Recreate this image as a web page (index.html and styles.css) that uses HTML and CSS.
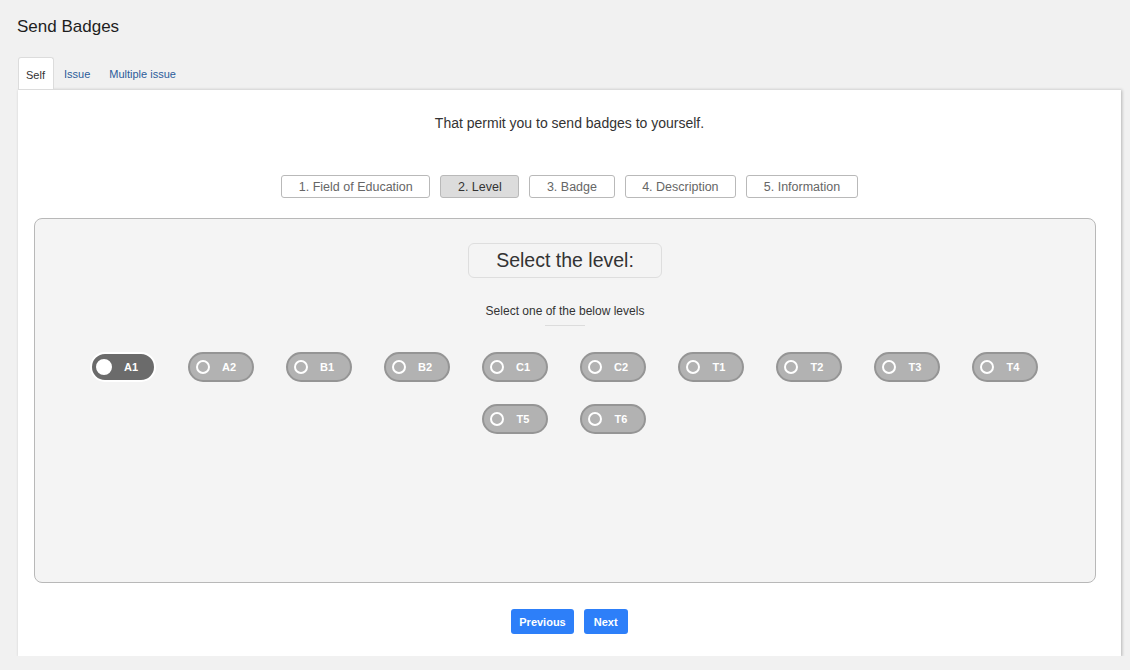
FILE: index.html
```html
<!DOCTYPE html>
<html>
<head>
<meta charset="utf-8">
<link rel="stylesheet" href="styles.css">
</head>
<body>
<div class="page">
  <h1 class="title">Send Badges</h1>
  <div class="tabs">
    <div class="tab active">Self</div>
    <div class="tab">Issue</div>
    <div class="tab">Multiple issue</div>
  </div>
  <div class="panel">
    <p class="intro">That permit you to send badges to yourself.</p>
    <div class="steps">
      <div class="step">1. Field of Education</div>
      <div class="step current">2. Level</div>
      <div class="step">3. Badge</div>
      <div class="step">4. Description</div>
      <div class="step">5. Information</div>
    </div>
    <div class="box">
      <div class="box-title">Select the level:</div>
      <div class="subtitle">Select one of the below levels</div>
      <div class="rule"></div>
      <div class="levels">
        <div class="level on"><span class="dot"></span><span class="lbl">A1</span></div>
        <div class="level"><span class="dot"></span><span class="lbl">A2</span></div>
        <div class="level"><span class="dot"></span><span class="lbl">B1</span></div>
        <div class="level"><span class="dot"></span><span class="lbl">B2</span></div>
        <div class="level"><span class="dot"></span><span class="lbl">C1</span></div>
        <div class="level"><span class="dot"></span><span class="lbl">C2</span></div>
        <div class="level"><span class="dot"></span><span class="lbl">T1</span></div>
        <div class="level"><span class="dot"></span><span class="lbl">T2</span></div>
        <div class="level"><span class="dot"></span><span class="lbl">T3</span></div>
        <div class="level"><span class="dot"></span><span class="lbl">T4</span></div>
        <div class="level"><span class="dot"></span><span class="lbl">T5</span></div>
        <div class="level"><span class="dot"></span><span class="lbl">T6</span></div>
      </div>
    </div>
    <div class="actions">
      <button class="btn">Previous</button>
      <button class="btn">Next</button>
    </div>
  </div>
</div>
</body>
</html>
```
FILE: styles.css
```css
html, body {
  margin: 0;
  padding: 0;
  background: #f1f1f1;
  font-family: "Liberation Sans", Arial, sans-serif;
}
.page {
  padding: 0 9px 0 18px;
}
.title {
  margin: 0 0 0 -1px;
  padding-top: 17px;
  height: 57px;
  font-size: 17px;
  font-weight: normal;
  color: #1e1e1e;
  line-height: 20px;
  box-sizing: border-box;
}
.tabs {
  display: flex;
  height: 32px;
  align-items: stretch;
}
.tab {
  font-size: 11px;
  color: #2c5c9a;
  padding: 2px 9px 0 10px;
  display: flex;
  align-items: center;
}
.tab.active {
  background: #fff;
  color: #333;
  border: 1px solid #dcdcdc;
  border-bottom: none;
  border-radius: 3px 3px 0 0;
  padding: 2px 8px 0 7px;
}
.panel {
  background: #fff;
  border-top: 1px solid #dcdcdc;
  box-shadow: 1px 1px 3px rgba(0,0,0,0.25);
  padding: 23px 25px 22px 16px;
}
.intro {
  margin: 0 0 0 9px;
  text-align: center;
  font-size: 14px;
  line-height: 20px;
  color: #333;
}
.steps {
  display: flex;
  justify-content: center;
  gap: 10px;
  margin: 42px 0 20px 9px;
}
.step {
  height: 23px;
  box-sizing: border-box;
  border: 1px solid #b9b9b9;
  border-radius: 3px;
  font-size: 12.5px;
  color: #666;
  padding: 0 16.6px;
  display: flex;
  align-items: center;
  background: #fff;
}
.step.current {
  background: #dcdcdc;
  color: #333;
}
.box {
  height: 365px;
  box-sizing: border-box;
  border: 1px solid #b8b8b8;
  border-radius: 8px;
  background: #f4f4f4;
  padding-top: 24px;
  display: flex;
  flex-direction: column;
  align-items: center;
}
.box-title {
  width: 194px;
  height: 35px;
  box-sizing: border-box;
  border: 1px solid #dedede;
  border-radius: 6px;
  display: flex;
  align-items: center;
  justify-content: center;
  font-size: 19.5px;
  color: #333;
}
.subtitle {
  margin-top: 25px;
  font-size: 12px;
  line-height: 16px;
  color: #333;
}
.rule {
  width: 40px;
  height: 1px;
  background: #dcdcdc;
  margin-top: 6px;
}
.levels {
  display: flex;
  flex-wrap: wrap;
  justify-content: center;
  margin: 15px 2px 0 0;
  width: 980px;
}
.level {
  width: 66px;
  height: 30px;
  box-sizing: border-box;
  margin: 11px 16px;
  border: 2px solid #959595;
  background: #b2b2b2;
  border-radius: 15px;
  display: flex;
  align-items: center;
}
.dot {
  width: 14px;
  height: 14px;
  box-sizing: border-box;
  border: 2px solid #fff;
  border-radius: 50%;
  margin-left: 6px;
}
.lbl {
  flex: 1;
  text-align: center;
  font-size: 11px;
  font-weight: bold;
  color: #fff;
  padding-right: 6px;
  padding-left: 2px;
}
.level.on {
  border-color: #fff;
  background: #6b6b6b;
}
.level.on .dot {
  width: 16px;
  height: 16px;
  background: #fff;
  margin-left: 4px;
}
.actions {
  display: flex;
  justify-content: center;
  gap: 10px;
  margin: 26px 0 0 9px;
}
.btn {
  height: 25px;
  min-width: 44px;
  border: none;
  border-radius: 3px;
  background: #2d7ff9;
  color: #fff;
  font-family: "Liberation Sans", Arial, sans-serif;
  font-size: 11px;
  font-weight: bold;
  padding: 0 8px;
}
```
